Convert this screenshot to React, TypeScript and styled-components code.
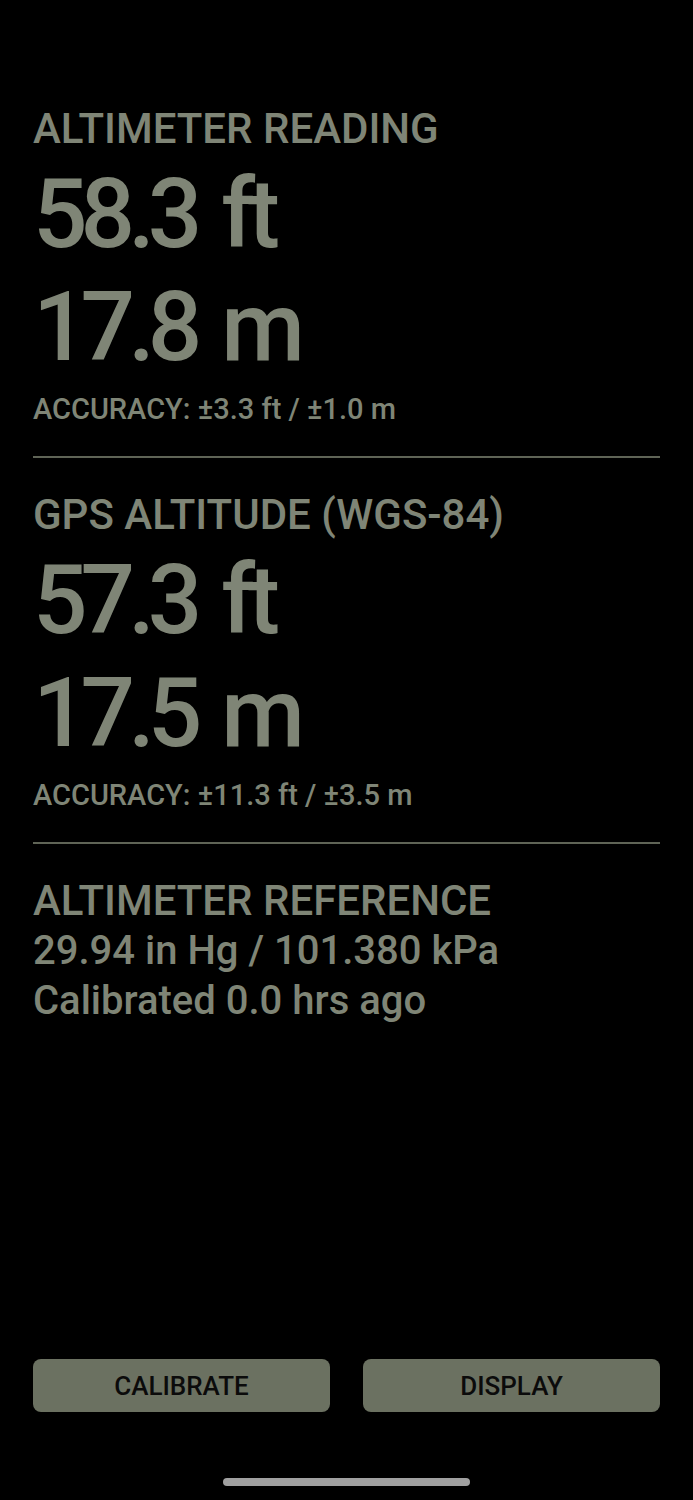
import styled, { createGlobalStyle } from "styled-components";

const GlobalStyle = createGlobalStyle`
  html, body {
    margin: 0;
    padding: 0;
    background: #000000;
  }
  body {
    font-family: Roboto, "Liberation Sans", sans-serif;
  }
`;

const TEXT = "#7f8576";

export default function App() {
  return (
    <>
      <GlobalStyle />
      <Screen>
        <Content>
          <Section>
            <Title>ALTIMETER READING</Title>
            <BigValue $first>58.3 ft</BigValue>
            <BigValue>17.8 m</BigValue>
            <Accuracy>ACCURACY: ±3.3 ft / ±1.0 m</Accuracy>
          </Section>
          <Divider />
          <Section>
            <Title>GPS ALTITUDE (WGS-84)</Title>
            <BigValue $first>57.3 ft</BigValue>
            <BigValue>17.5 m</BigValue>
            <Accuracy>ACCURACY: ±11.3 ft / ±3.5 m</Accuracy>
          </Section>
          <Divider />
          <Section>
            <Title>ALTIMETER REFERENCE</Title>
            <Line>29.94 in Hg / 101.380 kPa</Line>
            <Line>Calibrated 0.0 hrs ago</Line>
          </Section>
        </Content>
        <ButtonRow>
          <ActionButton>CALIBRATE</ActionButton>
          <ActionButton>DISPLAY</ActionButton>
        </ButtonRow>
        <HomeBar>
          <HomeIndicator />
        </HomeBar>
      </Screen>
    </>
  );
}

const Screen = styled.div`
  display: flex;
  flex-direction: column;
  height: 1500px;
  background: #000000;
  color: ${TEXT};
  padding: 0 33px;
  box-sizing: border-box;
`;

const Content = styled.div`
  flex: 1;
  padding-top: 104px;
`;

const Section = styled.div`
  display: flex;
  flex-direction: column;
  padding-bottom: 27px;
`;

const Title = styled.div`
  font-size: 42px;
  line-height: 50px;
  font-weight: 500;
  white-space: nowrap;
`;

const BigValue = styled.div<{ $first?: boolean }>`
  font-size: 96px;
  line-height: 113px;
  font-weight: 500;
  letter-spacing: -7px;
  word-spacing: 9px;
  margin-top: ${(p) => (p.$first ? "4px" : "0")};
  white-space: nowrap;
`;

const Accuracy = styled.div`
  font-size: 29px;
  line-height: 40px;
  font-weight: 500;
  margin-top: 5px;
  white-space: nowrap;
`;

const Line = styled.div`
  font-size: 40px;
  line-height: 50px;
  font-weight: 500;
  white-space: nowrap;
`;

const Divider = styled.div`
  height: 2px;
  background: #5f6456;
  margin-bottom: 32px;
`;

const ButtonRow = styled.div`
  display: grid;
  grid-template-columns: 1fr 1fr;
  gap: 33px;
  margin-bottom: 66px;
`;

const ActionButton = styled.button`
  height: 53px;
  border: none;
  border-radius: 8px;
  background: #6b7161;
  color: #0b0b0b;
  font-family: Roboto, "Liberation Sans", sans-serif;
  font-size: 26px;
  font-weight: 500;
  padding: 0;
  cursor: pointer;
`;

const HomeBar = styled.div`
  display: flex;
  justify-content: center;
  height: 22px;
`;

const HomeIndicator = styled.div`
  width: 247px;
  height: 8px;
  border-radius: 4px;
  background: #a0a0a0;
`;
